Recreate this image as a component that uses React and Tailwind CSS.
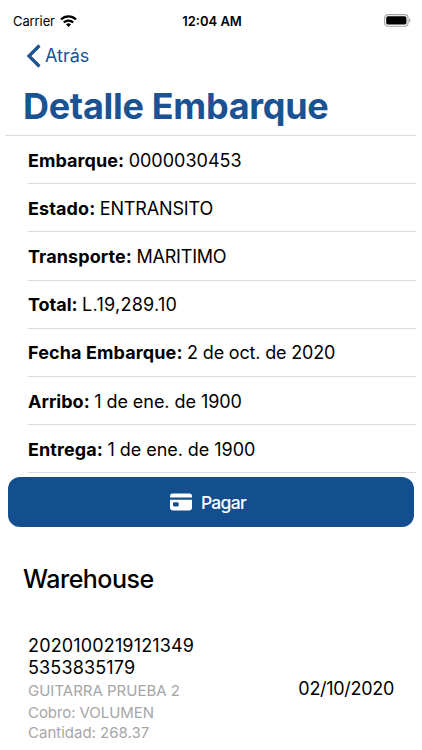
import clsx from 'clsx';

const DETAILS = [
  { label: 'Embarque:', value: '0000030453', bold: 'tracking-[0.07px]', text: 'tracking-[0px]' },
  { label: 'Estado:', value: 'ENTRANSITO', bold: 'tracking-[0.1px]', text: 'tracking-[-0.15px]' },
  { label: 'Transporte:', value: 'MARITIMO', bold: 'tracking-[0.08px]', text: 'tracking-[-0.2px]' },
  { label: 'Total:', value: 'L.19,289.10', bold: 'tracking-[-0.02px]', text: 'tracking-[0.27px]' },
  { label: 'Fecha Embarque:', value: '2 de oct. de 2020', bold: 'tracking-[0.12px]', text: 'tracking-[-0.17px]' },
  { label: 'Arribo:', value: '1 de ene. de 1900', bold: 'tracking-[0px]', text: 'tracking-[-0.05px]' },
  { label: 'Entrega:', value: '1 de ene. de 1900', bold: 'tracking-[0.1px]', text: 'tracking-[-0.05px]' },
];

function WifiIcon() {
  return (
    <svg width="17" height="12" viewBox="0 0 17 12" fill="none" stroke="#000" strokeWidth="2.3">
      <path d="M1 4.5a10.6 10.6 0 0 1 15 0" />
      <path d="M3.8 7.5a6.6 6.6 0 0 1 9.4 0" />
      <path d="M8.5 12 6 9.5a3.6 3.6 0 0 1 5 0z" fill="#000" stroke="none" />
    </svg>
  );
}

function BatteryIcon() {
  return (
    <svg width="27" height="13" viewBox="0 0 27 13">
      <rect x="0.6" y="0.6" width="23.4" height="11.6" rx="3.2" fill="none" stroke="#a3a3a3" strokeWidth="1.1" />
      <rect x="2.2" y="2.2" width="20.2" height="8.4" rx="1.7" fill="#000" />
      <path d="M25 4.4v4c.9-.3 1.4-1.1 1.4-2s-.5-1.7-1.4-2z" fill="#a3a3a3" />
    </svg>
  );
}

function StatusBar() {
  return (
    <div className="grid h-10 grid-cols-3 items-center pl-[13px] pr-[11px] text-[13px] leading-4">
      <div className="flex items-center gap-[5px] pt-px">
        <span className="tracking-[-0.1px]">Carrier</span>
        <WifiIcon />
      </div>
      <span className="pt-px text-center font-semibold">12:04 AM</span>
      <div className="flex justify-end">
        <BatteryIcon />
      </div>
    </div>
  );
}

function CardIcon() {
  return (
    <svg width="22" height="18" viewBox="0 0 22 18" fill="#fff">
      <path d="M0 4.6V3A2.6 2.6 0 0 1 2.6.4h16.8A2.6 2.6 0 0 1 22 3v1.6z" />
      <path
        fillRule="evenodd"
        d="M0 6.7h22v8.1a2.6 2.6 0 0 1-2.6 2.6H2.6A2.6 2.6 0 0 1 0 14.8zM4.4 9.3a1.4 1.4 0 0 0-1.4 1.4v1.5a1.4 1.4 0 0 0 1.4 1.4h2.9a1.4 1.4 0 0 0 1.4-1.4v-1.5a1.4 1.4 0 0 0-1.4-1.4z"
      />
    </svg>
  );
}

export default function App() {
  return (
    <div className="h-[750px] w-[422px] overflow-hidden bg-white font-[Inter,'Liberation_Sans',sans-serif] text-black">
      <StatusBar />

      <button className="flex h-8 items-center gap-1 pl-[26px] text-[#1a5293]">
        <svg width="15" height="24" viewBox="0 0 15 24" fill="none" stroke="currentColor" strokeWidth="3.2">
          <path d="M13.5 1.5 3 12l10.5 10.5" />
        </svg>
        <span className="text-lg">Atrás</span>
      </button>

      <h1 className="flex h-[63px] items-center pl-[23px] pt-1 text-[36px] font-bold tracking-[-0.3px] text-[#1a5293]">
        Detalle Embarque
      </h1>

      <div className="ml-[5px] mr-[6px] border-t border-[#dcdcdf] pl-[23px]">
        {DETAILS.map((row) => (
          <div key={row.label} className="flex h-[48.2px] items-center gap-[4.5px] border-b border-[#dcdcdf] pt-[2px] text-lg">
            <span className={clsx('font-bold', row.bold)}>{row.label}</span>
            <span className={row.text}>{row.value}</span>
          </div>
        ))}
      </div>

      <button className="ml-2 mt-[4px] flex h-[50px] w-[406px] items-center justify-center gap-[9px] rounded-xl bg-[#134f8f] pr-[6px] text-[17.5px] font-medium tracking-[-0.7px] text-white">
        <CardIcon />
        <span className="pt-[2px]">Pagar</span>
      </button>

      <h2 className="mt-9 pl-[23px] text-[25px] leading-8 font-medium tracking-[-0.5px]">Warehouse</h2>

      <div className="mt-10 flex items-center justify-between pl-7 pr-[28px]">
        <div className="w-[180px]">
          <p className="text-lg leading-[22px] tracking-[0.15px]">
            2020100219121349
            <br />
            5353835179
          </p>
          <p className="mt-px text-[15px] leading-[22px] text-[#a6a6a6]">GUITARRA PRUEBA 2</p>
          <p className="text-[15px] leading-[22px] tracking-[-0.07px] text-[#a6a6a6]">Cobro: VOLUMEN</p>
          <p className="text-[15px] leading-[18px] text-[#a6a6a6]">Cantidad: 268.37</p>
        </div>
        <span className="text-lg tracking-[-0.3px]">02/10/2020</span>
      </div>
    </div>
  );
}
